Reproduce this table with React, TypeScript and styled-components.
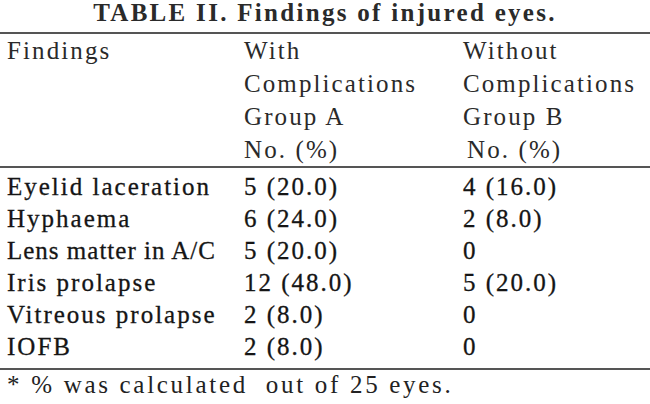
import React from 'react';
import styled, {createGlobalStyle} from "styled-components";

type Row = {
    finding: string,
    groupA: string,
    groupB: string,
}

const rows: Row[] = [
    {finding: 'Eyelid laceration', groupA: '5 (20.0)', groupB: '4 (16.0)'},
    {finding: 'Hyphaema', groupA: '6 (24.0)', groupB: '2 (8.0)'},
    {finding: 'Lens matter in A/C', groupA: '5 (20.0)', groupB: '0'},
    {finding: 'Iris prolapse', groupA: '12 (48.0)', groupB: '5 (20.0)'},
    {finding: 'Vitreous prolapse', groupA: '2 (8.0)', groupB: '0'},
    {finding: 'IOFB', groupA: '2 (8.0)', groupB: '0'},
];

const App: React.FC = () => {
    return (
        <Page>
            <GlobalStyle/>
            <Title>TABLE II. Findings of injured eyes.</Title>
            <Rule/>
            <HeaderGrid>
                <HeadCell>Findings</HeadCell>
                <HeadCell>
                    <div>With</div>
                    <div>Complications</div>
                    <div>Group A</div>
                    <div>No. (%)</div>
                </HeadCell>
                <HeadCell>
                    <div>Without</div>
                    <div>Complications</div>
                    <div>Group B</div>
                    <Indented>No. (%)</Indented>
                </HeadCell>
            </HeaderGrid>
            <Rule/>
            <BodyGrid>
                {rows.map(row => (
                    <React.Fragment key={row.finding}>
                        <Cell $compact={row.finding === 'Lens matter in A/C'}>{row.finding}</Cell>
                        <Cell>{row.groupA}</Cell>
                        <Cell>{row.groupB}</Cell>
                    </React.Fragment>
                ))}
            </BodyGrid>
            <Rule/>
            <Footnote>* % was calculated&nbsp; out of 25 eyes.</Footnote>
        </Page>
    )
}

export default App;

const GlobalStyle = createGlobalStyle`
    html, body {
        margin: 0;
        padding: 0;
        background: #fff;
    }

    body {
        font-family: "Liberation Serif", "Times New Roman", serif;
        color: #1c1c1c;
    }
`;

const Page = styled.div`
    width: 650px;
    height: 404px;
    overflow: hidden;
    background: #fff;
    display: flex;
    flex-direction: column;
`;

const Title = styled.h1`
    margin: 0;
    padding-bottom: 6px;
    font-size: 25px;
    line-height: 26px;
    font-weight: bold;
    letter-spacing: 2.3px;
    text-align: center;
    color: #2a2a2a;
`;

const Rule = styled.div`
    height: 2px;
    background: #555;
    width: 100%;
`;

const columns = `237px 219px 1fr`;

const HeaderGrid = styled.div`
    display: grid;
    grid-template-columns: ${columns};
    padding-left: 7px;
    font-size: 25px;
    line-height: 33px;
    letter-spacing: 2.1px;
    color: #2a2a2a;
`;

const HeadCell = styled.div`
    display: flex;
    flex-direction: column;
`;

const Indented = styled.div`
    padding-left: 4px;
`;

const BodyGrid = styled.div`
    display: grid;
    grid-template-columns: ${columns};
    padding: 3px 0 5px 7px;
    font-size: 25px;
    line-height: 32px;
    color: #151515;
    -webkit-text-stroke: 0.3px #151515;
`;

const Cell = styled.div<{ $compact?: boolean }>`
    white-space: nowrap;
    letter-spacing: ${props => props.$compact ? '1px' : '2px'};
`;

const Footnote = styled.div`
    padding-left: 7px;
    font-size: 25px;
    line-height: 30px;
    letter-spacing: 2.7px;
    color: #222;
`;
